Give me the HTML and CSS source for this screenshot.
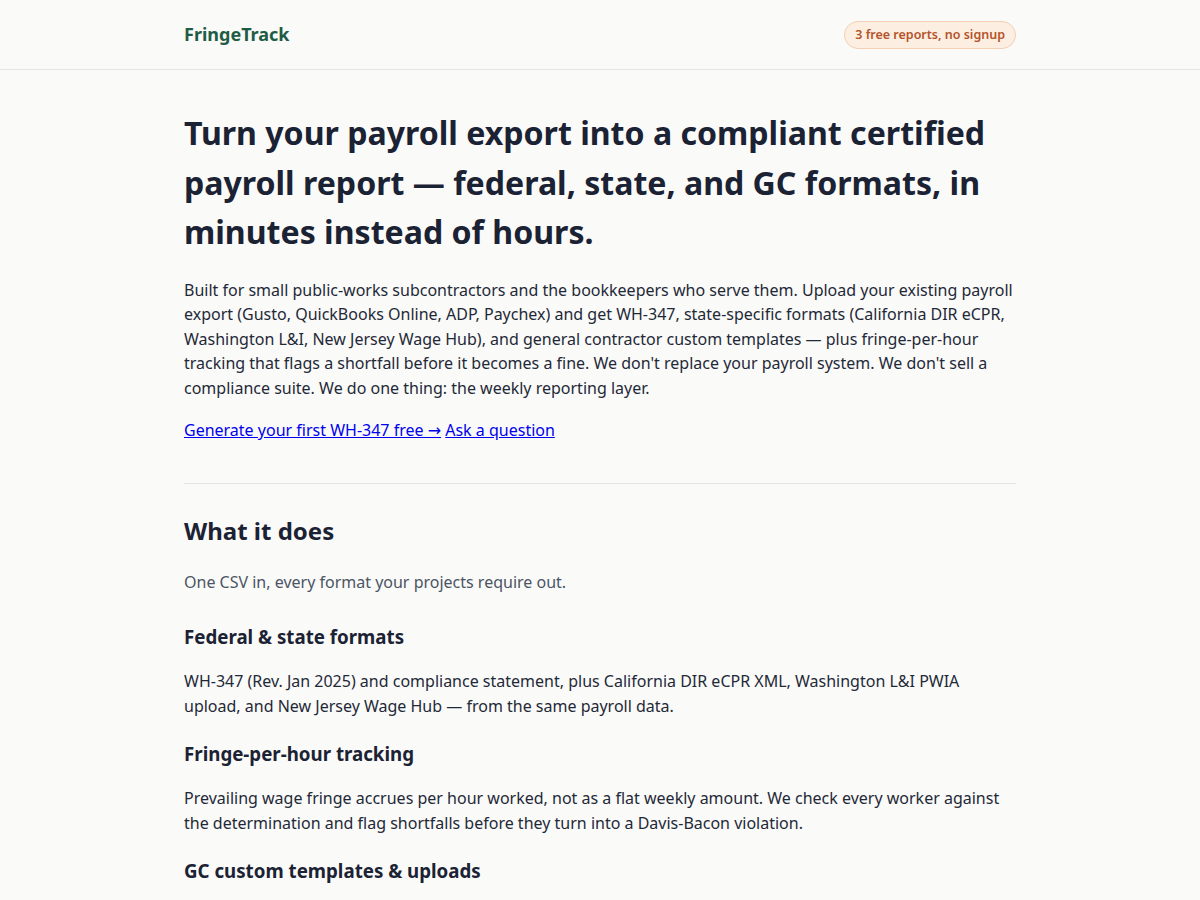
FILE: index.html
```html
<!DOCTYPE html>
<html lang="en">
<head>
<meta charset="utf-8">
<title>FringeTrack</title>
<link rel="stylesheet" href="styles.css">
</head>
<body>
<header class="site-header">
  <div class="container header-inner">
    <a class="logo" href="#">FringeTrack</a>
    <span class="badge">3 free reports, no signup</span>
  </div>
</header>
<main class="container">
  <section class="hero">
    <h1>Turn your payroll export into a compliant certified payroll report — federal, state, and GC formats, in minutes instead of hours.</h1>
    <p>Built for small public-works subcontractors and the bookkeepers who serve them. Upload your existing payroll export (Gusto, QuickBooks Online, ADP, Paychex) and get WH-347, state-specific formats (California DIR eCPR, Washington L&amp;I, New Jersey Wage Hub), and general contractor custom templates — plus fringe-per-hour tracking that flags a shortfall before it becomes a fine. We don't replace your payroll system. We don't sell a compliance suite. We do one thing: the weekly reporting layer.</p>
    <p class="links"><a href="#">Generate your first WH-347 free →</a> <a href="#">Ask a question</a></p>
  </section>
  <hr class="divider">
  <section class="features">
    <h2>What it does</h2>
    <p class="lead">One CSV in, every format your projects require out.</p>
    <h3>Federal &amp; state formats</h3>
    <p>WH-347 (Rev. Jan 2025) and compliance statement, plus California DIR eCPR XML, Washington L&amp;I PWIA upload, and New Jersey Wage Hub — from the same payroll data.</p>
    <h3>Fringe-per-hour tracking</h3>
    <p>Prevailing wage fringe accrues per hour worked, not as a flat weekly amount. We check every worker against the determination and flag shortfalls before they turn into a Davis-Bacon violation.</p>
    <h3>GC custom templates &amp; uploads</h3>
    <p>Map your data into the spreadsheet or portal format your general contractor asks for, and keep each template for the next week's report.</p>
  </section>
</main>
</body>
</html>
```
FILE: styles.css
```css
* { box-sizing: border-box; }
html, body { margin: 0; padding: 0; }
body {
  background: #fafaf9;
  color: #1f2937;
  font-family: "Noto Sans", "DejaVu Sans", sans-serif;
  font-size: 16px;
  line-height: 24.5px;
}
.container {
  max-width: 880px;
  margin: 0 auto;
  padding: 0 24px;
}
.site-header {
  border-bottom: 1px solid #e7e5e4;
}
.header-inner {
  display: flex;
  align-items: center;
  justify-content: space-between;
  height: 69px;
}
.logo {
  color: #1f5c45;
  font-weight: 700;
  font-size: 18px;
  text-decoration: none;
}
.badge {
  display: inline-block;
  background: #fdeee2;
  border: 1px solid #f4cfb3;
  color: #b4542a;
  font-size: 12.5px;
  font-weight: 600;
  line-height: 18px;
  padding: 4px 10px;
  border-radius: 999px;
}
.hero { padding-top: 38px; }
h1 {
  font-size: 32.1px;
  line-height: 49.6px;
  font-weight: 700;
  color: #1a2233;
  margin: 0 0 21px;
}
.hero p { margin: 0 0 18px; }
.links a { color: #0000ee; }
.divider {
  border: 0;
  border-top: 1px solid #e5e4e2;
  margin: 40px 0 30px;
}
h2 {
  font-size: 24px;
  line-height: 34px;
  font-weight: 700;
  color: #1a2233;
  margin: 0 0 22px;
}
.features p { margin: 0 0 22px; }
.features .lead { color: #4b5563; margin: 0 0 29px; }
h3 {
  font-size: 18.72px;
  line-height: 28px;
  font-weight: 700;
  color: #1a2233;
  margin: 0 0 18px;
}
```
